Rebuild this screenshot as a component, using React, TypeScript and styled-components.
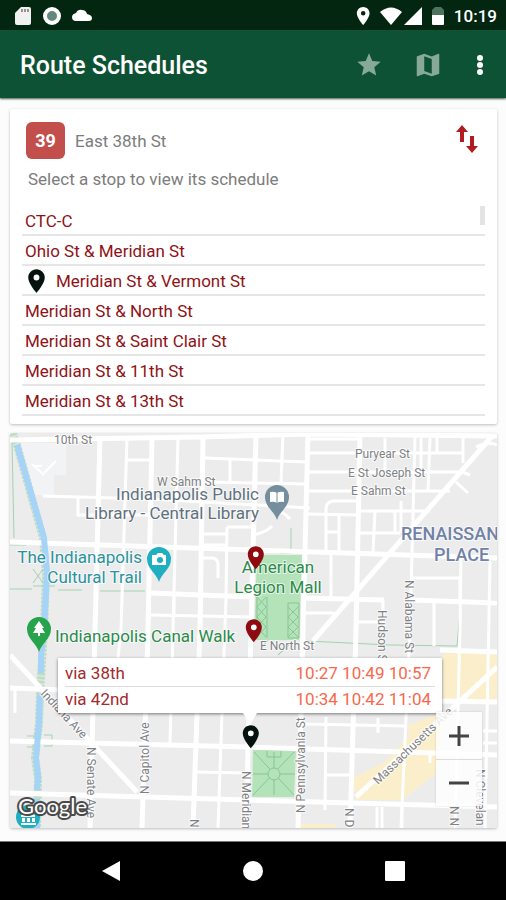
import React from "react";
import styled, { createGlobalStyle } from "styled-components";

const GlobalStyle = createGlobalStyle`
  *, *::before, *::after { box-sizing: border-box; }
  body {
    margin: 0;
    background: #fdfcfc;
    font-family: Roboto, "Liberation Sans", sans-serif;
  }
  button { font: inherit; border: 0; padding: 0; background: none; cursor: pointer; }
`;

const Screen = styled.div`
  display: flex;
  flex-direction: column;
  min-height: 100vh;
`;

const StatusBar = styled.div`
  display: flex;
  align-items: center;
  justify-content: space-between;
  height: 30px;
  padding: 2px 9px 0 14px;
  background: #02260f;
  color: #fff;
`;

const StatusGroup = styled.div<{ $gap: number }>`
  display: flex;
  align-items: center;
  gap: ${(p) => p.$gap}px;
`;

const Clock = styled.time`
  margin-left: 6px;
  font-size: 17px;
  line-height: 24px;
  font-weight: 500;
`;

const AppBar = styled.header`
  display: flex;
  align-items: center;
  justify-content: space-between;
  height: 68px;
  padding: 2px 10px 0 20px;
  background: #0e5235;
  color: #fff;
  box-shadow: 0 1px 2px rgba(0, 20, 10, 0.7);
`;

const Title = styled.h1`
  margin: 0;
  padding-top: 2px;
  font-size: 25px;
  line-height: 32px;
  font-weight: 500;
`;

const Actions = styled.div`
  display: flex;
  align-items: center;
  gap: 27px;
`;

const IconButton = styled.button<{ $dim?: boolean; $color?: string }>`
  display: grid;
  place-items: center;
  min-width: 32px;
  height: 32px;
  color: ${(p) => p.$color ?? "#fff"};
  opacity: ${(p) => (p.$dim ? 0.5 : 1)};
`;

const MenuButton = styled(IconButton)`
  margin-left: -7px;
`;

const Content = styled.main`
  flex: 1;
  display: flex;
  flex-direction: column;
  gap: 9px;
  padding: 11px 9px 13px 10px;
`;

const Card = styled.section`
  background: #fff;
  border-radius: 2px;
  box-shadow: 0 1px 3px rgba(0, 0, 0, 0.25);
`;

const StopsCard = styled(Card)`
  padding: 13px 12px 8px;
`;

const RouteRow = styled.div`
  display: flex;
  align-items: center;
  gap: 10px;
  padding: 0 2px 0 4px;
`;

const RouteBadge = styled.span`
  display: grid;
  place-items: center;
  width: 39px;
  height: 37px;
  border-radius: 6px;
  background: #c24f4c;
  color: #fff;
  font-size: 18px;
  font-weight: 700;
`;

const RouteName = styled.span`
  flex: 1;
  color: #7c7c7c;
  font-size: 17px;
  line-height: 24px;
`;

const Hint = styled.p`
  margin: 8px 6px;
  color: #7c7c7c;
  font-size: 17px;
  line-height: 24px;
`;

const StopList = styled.ul`
  position: relative;
  margin: 15px 0 0;
  padding: 0;
  list-style: none;

  &::after {
    content: "";
    position: absolute;
    top: 0;
    right: 0;
    width: 5px;
    height: 19px;
    background: #e4e4e4;
  }
`;

const StopItem = styled.li`
  border-bottom: 2px solid #e6e6e6;
`;

const StopButton = styled.button`
  display: flex;
  align-items: center;
  gap: 8px;
  width: 100%;
  height: 28px;
  padding: 2px 3px 0;
  color: #8f1216;
  font-size: 17px;
  line-height: 24px;
  text-align: left;
`;

const MapCard = styled(Card)`
  position: relative;
  flex: 1;
  min-height: 395px;
  overflow: hidden;
  background: #ececec;
`;

const MapCanvas = styled.svg`
  position: absolute;
  inset: 0;
  width: 100%;
  height: 100%;
`;

const InfoWindow = styled.div`
  position: absolute;
  left: 48px;
  right: 55px;
  top: 225px;
  padding: 3px 7px 1px;
  background: #fff;
  box-shadow: 0 1px 3px rgba(0, 0, 0, 0.5);

  &::after {
    content: "";
    position: absolute;
    left: 50%;
    top: 100%;
    border: 7px solid transparent;
    border-top: 12px solid #fff;
    border-bottom: 0;
    transform: translateX(-50%);
  }
`;

const Departures = styled.table`
  width: 100%;
  border-collapse: collapse;
  font-size: 17px;
  line-height: 25px;

  th, td { padding: 0; font-weight: 400; }
  th { color: #a32a2e; text-align: left; }
  td { color: #f9684c; text-align: right; padding-right: 4px; }
  tr + tr { border-top: 1px solid #dcdcdc; }
`;

const ZoomControls = styled.div`
  position: absolute;
  right: 15px;
  bottom: 22px;
  display: flex;
  flex-direction: column;
  width: 46px;
  background: rgba(255, 255, 255, 0.82);
  box-shadow: 0 0 2px rgba(0, 0, 0, 0.15);
`;

const ZoomButton = styled.button`
  display: grid;
  place-items: center;
  height: 47px;
  color: #444;

  & + & { border-top: 1px solid #dcdcdc; }
`;

const NavBar = styled.nav`
  display: flex;
  align-items: center;
  justify-content: space-around;
  height: 59px;
  padding: 0 40px;
  background: #000;
  border-top: 1px solid #777;
`;

const NavButton = styled.button`
  display: grid;
  place-items: center;
  width: 48px;
  height: 48px;
  color: #fff;
`;

const PIN =
  "M12 2C8.13 2 5 5.13 5 9c0 5.25 7 13 7 13s7-7.75 7-13c0-3.87-3.13-7-7-7zm0 9.5a2.5 2.5 0 1 1 0-5 2.5 2.5 0 0 1 0 5z";

const stops = [
  "CTC-C",
  "Ohio St & Meridian St",
  "Meridian St & Vermont St",
  "Meridian St & North St",
  "Meridian St & Saint Clair St",
  "Meridian St & 11th St",
  "Meridian St & 13th St",
];
const selectedStop = "Meridian St & Vermont St";

const departures = [
  { via: "via 38th", times: "10:27 10:49 10:57" },
  { via: "via 42nd", times: "10:34 10:42 11:04" },
];

const wideRoads = [
  "M0 7L190 4 300 1 487 3",
  "M90 4L85 197 80 395",
  "M142 4L138 197 132 395",
  "M193 4L190 197 183 395",
  "M246 0L243 120 236 395",
  "M298 0L293 197 288 395",
  "M350 0L346 197 340 395",
  "M0 109L243 117 487 125",
  "M140 160L243 164M293 165L374 167M401 167L487 170",
  "M0 222L127 359",
  "M0 255L50 257 240 260 430 268 487 269",
  "M0 308L237 314 487 322",
  "M0 360L237 367 487 374",
  "M483 2L303 208",
  "M346 364L487 234",
  "M430 217L487 219",
];

const thinRoads = [
  "M117 4L111 197 108 225",
  "M168 4L163 197 160 310",
  "M220 27V50M217 94L216 165 208 395",
  "M273 0L271 50M321 120V164",
  "M405 4L400 197 391 395",
  "M453 4V30M451 124L450 197 445 395",
  "M480 128L475 395M424 167V213M373 167V197",
  "M33 63L140 66 300 75",
  "M68 65V82H140",
  "M117 27H142M195 25L297 29M195 49L297 51",
  "M193 101H218M193 112H218M217 94H243",
  "M140 182L243 184M164 163V182",
  "M193 125H203Q208 126 208 132V145",
  "M298 6H350M298 20L453 20M298 39H455M298 58H440",
  "M375 5V38M420 5L418 58M411 5V38M427 5V20",
  "M350 68H323Q316 69 316 76V120",
  "M298 81L350 82M350 78H420M350 100H390",
  "M329 82V120M316 99H329M365 78L363 120M385 79V100M391 68V100",
  "M401 145H450M450 145V167",
  "M446 49L458 60M452 39L460 42M466 14Q478 8 487 12",
  "M296 180H324M346 189H368",
  "M243 102Q257 99 262 93M268 78Q275 80 280 86",
  "M187 339L237 340M293 291L396 293",
  "M316 284L315 377M315 342H340M368 285V300",
  "M5 257V280M367 374V395M372 374V395M392 374V395M420 320V330M473 298H487M473 310H487",
];

const paths = [
  "M270 116V120H281V95",
  "M0 112H16M0 156H22M48 157H72M90 158H135",
  "M23 136L33 150M33 136L23 150M23 153H45",
  "M2 8L4 105",
  "M17 303H28V314H17M34 302H42V313H34M42 308H60",
  "M297 208L380 212 447 213 450 178M452 168H487",
];

const PlaceLabel = styled.text<{ $color: string; $district?: boolean }>`
  font-size: ${(p) => (p.$district ? 18 : 17)}px;
  font-weight: ${(p) => (p.$district ? 500 : 400)};
  fill: ${(p) => p.$color};
  stroke: rgba(255, 255, 255, 0.7);
  stroke-width: 2px;
  paint-order: stroke;
`;

const StreetLabel = styled.text`
  font-size: 12px;
  fill: #7e8184;
  stroke: rgba(255, 255, 255, 0.7);
  stroke-width: 2px;
  paint-order: stroke;
`;

const LogoText = styled.text`
  font-family: Lato, "Liberation Sans", sans-serif;
  font-size: 22px;
  font-weight: 400;
  fill: #fff;
  stroke: #4a4a4a;
  stroke-width: 4px;
  stroke-linejoin: round;
  paint-order: stroke;
`;

const streets: { name: string; x: number; y: number; angle?: number }[] = [
  { name: "10th St", x: 44, y: 11 },
  { name: "W Sahm St", x: 147, y: 53 },
  { name: "Puryear St", x: 345, y: 25 },
  { name: "E St Joseph St", x: 338, y: 44 },
  { name: "E Sahm St", x: 341, y: 62 },
  { name: "E North St", x: 250, y: 217 },
  { name: "N Alabama St", x: 395, y: 147, angle: 90 },
  { name: "Hudson St", x: 368, y: 177, angle: 90 },
  { name: "N Capitol Ave", x: 139, y: 361, angle: -90 },
  { name: "N Senate Ave", x: 77, y: 314, angle: 90 },
  { name: "Indiana Ave", x: 30, y: 261, angle: 47 },
  { name: "N Meridian", x: 232, y: 338, angle: 90 },
  { name: "N Pennsylvania St", x: 295, y: 380, angle: -90 },
  { name: "N D", x: 335, y: 375, angle: 90 },
  { name: "Massachusetts Ave", x: 368, y: 352, angle: -44 },
  { name: "N", x: 180, y: 386, angle: 90 },
  { name: "N N", x: 440, y: 373, angle: 90 },
  { name: "N Clevelan", x: 466, y: 336, angle: 90 },
];

function Pin({ x, y, color }: { x: number; y: number; color: string }) {
  return (
    <g transform={`translate(${x - 14} ${y - 25}) scale(1.15)`}>
      <circle cx="12" cy="9" r="4" fill="#fff" />
      <path d={PIN} fill={color} />
    </g>
  );
}

function PlacePin({ x, y, color, children }: { x: number; y: number; color: string; children: React.ReactNode }) {
  return (
    <g transform={`translate(${x} ${y})`}>
      <path d="M0 23C-2 15 -12 10 -12 0A12 12 0 1 1 12 0C12 10 2 15 0 23Z" fill={color} />
      {children}
    </g>
  );
}

function CityMap() {
  return (
    <MapCanvas viewBox="0 0 487 395" preserveAspectRatio="xMidYMid slice" role="img" aria-label="Map of downtown Indianapolis">
      <rect width="487" height="395" fill="#ececed" />
      <path d="M10 10H56V42H44V62H22Z" fill="#f2f3f5" />
      <path d="M247 122H292L289 207H244Z" fill="#b4e2b9" />
      <path d="M243 317H286L284 364H242Z" fill="#b4e2b9" />
      <path d="M432 222L444 218H487V269H433Z M398 292L436 278 430 310 427 340 392 367H346L343 345 376 328 398 304Z M290 391H325V395H290Z" fill="#fbefcb" />
      <path d="M3 0L7 12 33 105 36 140 34 197 30 260 29 290 25 325 28 345 27 395" fill="none" stroke="#bfdcc4" strokeWidth="8" strokeDasharray="3 1" />
      <g fill="none" stroke="#a3d3ac" strokeWidth="1">
        {paths.map((d) => <path key={d} d={d} />)}
      </g>
      <g fill="none" stroke="#fff" strokeWidth="3">
        {thinRoads.map((d) => <path key={d} d={d} />)}
      </g>
      <g fill="none" stroke="#fff" strokeWidth="5">
        {wideRoads.map((d) => <path key={d} d={d} />)}
      </g>
      <path d="M7 12L34 105 37 140 34 197 31 222" fill="none" stroke="#a6d3f8" strokeWidth="6" />
      <path d="M31 222V240M30 262L29 290 26 325 28 345 27 357M27 366V395" fill="none" stroke="#a6d3f8" strokeWidth="6" />
      <path d="M22 31L34 42M25 33H32M34 40L46 28" fill="none" stroke="#fff" strokeWidth="2" />
      <g fill="none" stroke="#86c795" strokeWidth="1">
        <path d="M247 164L256 174 247 184 256 194 247 204M256 164L247 174 256 184 247 194 256 204M247 164V205M257 164V205M278 174L288 184 278 194 288 204M288 174L278 184 288 194 278 204M278 170V205H289V170Z" />
        <path d="M244 319L284 362M284 319L243 362M264 319V362M243 341H285M257 318V324H271V318M250 217L258 207M268 222L282 209" />
        <circle cx="264" cy="341" r="6" fill="#b4e2b9" />
      </g>
      {streets.map((s) => (
        <StreetLabel key={s.name} transform={`translate(${s.x} ${s.y}) rotate(${s.angle ?? 0})`}>
          {s.name}
        </StreetLabel>
      ))}
      <PlaceLabel $color="#60717d" x="249" y="67" textAnchor="end">Indianapolis Public</PlaceLabel>
      <PlaceLabel $color="#60717d" x="249" y="86" textAnchor="end">Library - Central Library</PlaceLabel>
      <PlaceLabel $color="#7082a6" $district x="391" y="107">RENAISSAN</PlaceLabel>
      <PlaceLabel $color="#7082a6" $district x="424" y="128">PLACE</PlaceLabel>
      <PlaceLabel $color="#2c929d" x="132" y="130" textAnchor="end">The Indianapolis</PlaceLabel>
      <PlaceLabel $color="#2c929d" x="132" y="150" textAnchor="end">Cultural Trail</PlaceLabel>
      <PlaceLabel $color="#2c8a4b" x="268" y="140" textAnchor="middle">American</PlaceLabel>
      <PlaceLabel $color="#2c8a4b" x="268" y="160" textAnchor="middle">Legion Mall</PlaceLabel>
      <PlaceLabel $color="#2c8a4b" x="45" y="209">Indianapolis Canal Walk</PlaceLabel>

      <PlacePin x={267} y={64} color="#748e9e">
        <path d="M-7 -5Q-3 -6 0 -4Q3 -6 7 -5V5Q3 4 0 6Q-3 4 -7 5Z" fill="#fff" />
        <path d="M0 -4V6" stroke="#748e9e" strokeWidth="1" />
      </PlacePin>
      <PlacePin x={149} y={126} color="#1fafc0">
        <path d="M-7 -4H-3L-1 -6H3L5 -4H7V6H-7Z" fill="#fff" />
        <circle cx="1" cy="1" r="3" fill="#1fafc0" />
      </PlacePin>
      <PlacePin x={29} y={196} color="#27a34b">
        <path d="M0 -8L5 -1H3L6 4H1V7H-1V4H-6L-3 -1H-5Z" fill="#fff" />
      </PlacePin>
      <circle cx="18" cy="384" r="12" fill="#1fafc0" />
      <path d="M11 382L18 378 25 382V384H11ZM12 385H15V389H12ZM17 385H20V389H17ZM22 385H25V389H22ZM11 390H26V392H11Z" fill="#fff" />
      <LogoText x="8" y="381">Google</LogoText>

      <Pin x={246} y={136} color="#8e0b10" />
      <Pin x={244} y={209} color="#8e0b10" />
      <Pin x={241} y={315} color="#06120d" />
    </MapCanvas>
  );
}

export default function App() {
  return (
    <Screen>
      <GlobalStyle />
      <StatusBar>
        <StatusGroup $gap={11}>
          <svg width="18" height="20" viewBox="0 0 18 20" aria-hidden="true">
            <path d="M7 1H15Q17 1 17 3V17Q17 19 15 19H3Q1 19 1 17V7Z" fill="#f1f1f1" />
            <path d="M8 3V6M11 3V6M14 3V6" stroke="#777" strokeWidth="1.5" />
          </svg>
          <svg width="18" height="20" viewBox="0 0 18 20" aria-hidden="true">
            <circle cx="9" cy="10" r="7" fill="#65877a" stroke="#fff" strokeWidth="4" />
          </svg>
          <svg width="20" height="20" viewBox="0 0 20 20" aria-hidden="true">
            <path d="M4 15Q0 15 0 11Q0 8 4 7Q6 3 10 4Q14 4 15 8Q20 9 20 12Q20 15 17 15Z" fill="#fff" />
          </svg>
        </StatusGroup>
        <StatusGroup $gap={2}>
          <svg width="26" height="20" viewBox="3 1 22 22" aria-hidden="true"><path d={PIN} fill="#fff" /></svg>
          <svg width="22" height="20" viewBox="0 0 22 20" aria-hidden="true">
            <path d="M0 6Q11 -3 22 6L11 19Z" fill="#fff" />
          </svg>
          <svg width="18" height="20" viewBox="0 0 18 20" aria-hidden="true"><path d="M0 19L18 1V19Z" fill="#fff" /></svg>
          <svg width="22" height="20" viewBox="0 0 22 20" aria-hidden="true">
            <path d="M8 9V4L11 1H17L20 4V9Z" fill="#4d735d" />
            <path d="M8 9H20V18Q20 19 19 19H9Q8 19 8 18Z" fill="#fff" />
          </svg>
          <Clock>10:19</Clock>
        </StatusGroup>
      </StatusBar>
      <AppBar>
        <Title>Route Schedules</Title>
        <Actions>
          <IconButton $dim aria-label="Favorites">
            <svg width="28" height="28" viewBox="0 0 24 24" fill="currentColor">
              <path d="M12 17.27L18.18 21l-1.64-7.03L22 9.24l-7.19-.61L12 2 9.19 8.63 2 9.24l5.46 4.73L5.82 21z" />
            </svg>
          </IconButton>
          <IconButton $dim aria-label="Map">
            <svg width="30" height="30" viewBox="0 0 24 24" fill="currentColor">
              <path d="M20.5 3l-.16.03L15 5.1 9 3 3.36 4.9c-.21.07-.36.25-.36.48V20.5c0 .28.22.5.5.5l.16-.03L9 18.9l6 2.1 5.64-1.9c.21-.07.36-.25.36-.48V3.5c0-.28-.22-.5-.5-.5zM15 19l-6-2.11V5l6 2.11V19z" />
            </svg>
          </IconButton>
          <MenuButton aria-label="More options">
            <svg width="8" height="24" viewBox="0 0 8 24" fill="currentColor">
              <circle cx="4" cy="5" r="3" /><circle cx="4" cy="12" r="3" /><circle cx="4" cy="19" r="3" />
            </svg>
          </MenuButton>
        </Actions>
      </AppBar>
      <Content>
        <StopsCard>
          <RouteRow>
            <RouteBadge>39</RouteBadge>
            <RouteName>East 38th St</RouteName>
            <IconButton $color="#b01c1f" aria-label="Switch direction">
              <svg width="24" height="32" viewBox="0 0 24 32" fill="currentColor">
                <path d="M7 0L13 7H9V17H5V7H1Z M15 11H19V21H23L17 28 11 21H15Z" />
              </svg>
            </IconButton>
          </RouteRow>
          <Hint>Select a stop to view its schedule</Hint>
          <StopList>
            {stops.map((stop) => (
              <StopItem key={stop}>
                <StopButton>
                  {stop === selectedStop && (
                    <svg width="23" height="26" viewBox="3 1 18 22" aria-hidden="true"><path d={PIN} fill="#06120d" /></svg>
                  )}
                  {stop}
                </StopButton>
              </StopItem>
            ))}
          </StopList>
        </StopsCard>
        <MapCard>
          <CityMap />
          <InfoWindow>
            <Departures aria-label="Next departures">
              <tbody>
                {departures.map((d) => (
                  <tr key={d.via}>
                    <th scope="row">{d.via}</th>
                    <td>{d.times}</td>
                  </tr>
                ))}
              </tbody>
            </Departures>
          </InfoWindow>
          <ZoomControls>
            <ZoomButton aria-label="Zoom in">
              <svg width="22" height="22" viewBox="0 0 22 22"><path d="M11 1V21M1 11H21" stroke="currentColor" strokeWidth="3" /></svg>
            </ZoomButton>
            <ZoomButton aria-label="Zoom out">
              <svg width="22" height="22" viewBox="0 0 22 22"><path d="M1 11H21" stroke="currentColor" strokeWidth="3" /></svg>
            </ZoomButton>
          </ZoomControls>
        </MapCard>
      </Content>
      <NavBar aria-label="System">
        <NavButton aria-label="Back">
          <svg width="20" height="22" viewBox="0 0 20 22"><path d="M19 1V21L1 11Z" fill="currentColor" /></svg>
        </NavButton>
        <NavButton aria-label="Home">
          <svg width="22" height="22" viewBox="0 0 22 22"><circle cx="11" cy="11" r="10" fill="currentColor" /></svg>
        </NavButton>
        <NavButton aria-label="Recent apps">
          <svg width="20" height="20" viewBox="0 0 20 20"><rect width="20" height="20" rx="1" fill="currentColor" /></svg>
        </NavButton>
      </NavBar>
    </Screen>
  );
}
